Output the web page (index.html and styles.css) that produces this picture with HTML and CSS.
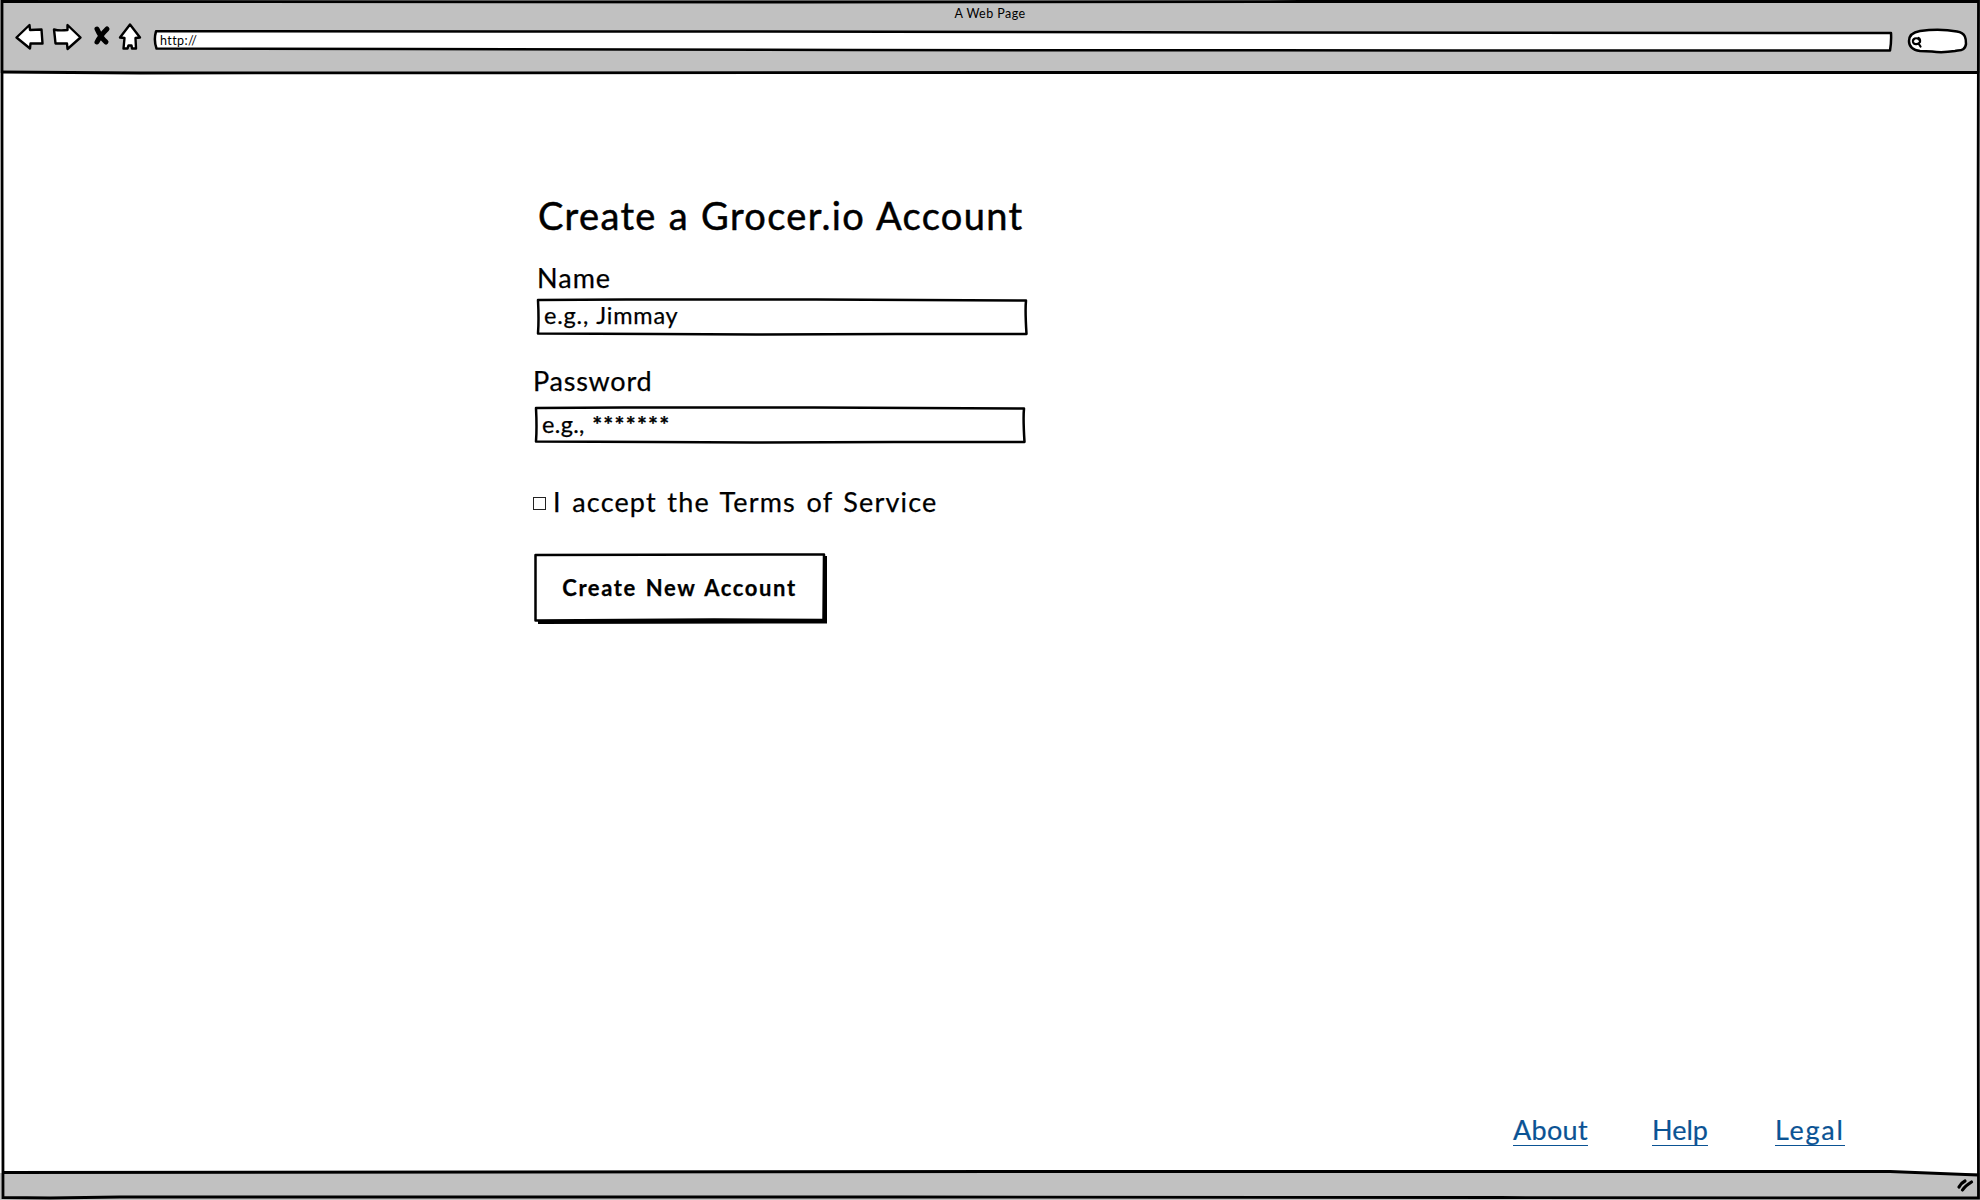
FILE: index.html
```html
<!DOCTYPE html>
<html lang="en">
<head>
<meta charset="utf-8">
<title>A Web Page</title>
<link rel="stylesheet" href="styles.css">
</head>
<body>
<div class="browser">
  <header class="chrome">
    <div class="window-title">A Web Page</div>
    <div class="toolbar">
      <svg class="nav-icons" width="130" height="32" viewBox="14 20 130 32">
        <g class="outline">
          <path d="M16.500 37.500 L29.500 25 L30 30 L41.500 29.500 L42.500 43.500 L30.500 43.500 L30 48.500 Z"/>
          <path d="M80.500 37.500 L67.500 25 L67.500 30 Q59 31 54 29.500 Q55 38 55.500 43.500 L67 43.500 L67.500 49 Z"/>
          <path d="M130 24.500 L120 37.500 L124.500 38 L123.500 48.500 L127.500 48.500 L128.500 45.500 L131.500 45.500 L132 48.500 L136 48.500 L135.500 38 L140 37.500 Z"/>
        </g>
        <path class="cross" d="M97 29 Q101 38 106 42 M107 29 Q100 36 97 42"/>
      </svg>
      <div class="address">
        <svg class="sketch" viewBox="0 0 1740 22" preserveAspectRatio="none"><path class="box" d="M3 1.300 L600 1.500 L1100 2.500 L1738 3 Q1738.500 12 1737 20.500 L1300 20.500 L700 20 L250 19 L3.500 18.500 Q.5 10 3 1.300 Z"/></svg>
        <span class="text">http://</span>
      </div>
      <svg class="search" width="62" height="28" viewBox="1907 27 62 28">
        <path class="box" d="M1909 41 C1909 34 1914 32 1920 31 Q1940 28.500 1957 31.500 C1966 33 1966 39 1966 44 C1965 51 1960 50 1955 51 Q1942 53 1932 51.500 L1920 51 C1913 50 1909 47 1909 41 Z"/>
        <path class="lens" d="M1919.500 40 C1916 36.500 1912.500 39 1913 42 C1914 45.500 1919 44 1920 42 Q1920.500 39 1918.500 38 M1918.500 43.500 L1920.500 46.500"/>
      </svg>
    </div>
  </header>
  <main class="page">
    <form class="account">
      <h1>Create a Grocer.io Account</h1>
      <label class="name-label">Name</label>
      <div class="field name-field">
        <svg class="sketch" viewBox="0 0 492 38"><path class="box" d="M2 2 L90 1.500 L280 1.500 L490 2.500 Q489 12 490.500 36 L360 36 L220 36.500 L120 36 L2 35.500 Q3 22 2 2 Z"/></svg>
        <span class="text">e.g., Jimmay</span>
      </div>
      <label class="password-label">Password</label>
      <div class="field password-field">
        <svg class="sketch" viewBox="0 0 492 38"><path class="box" d="M2 2 L90 1.500 L280 1.500 L490 2.500 Q489 12 490.500 36 L360 36 L220 36.500 L120 36 L2 35.500 Q3 22 2 2 Z"/></svg>
        <span class="text">e.g., <span class="stars">*******</span></span>
      </div>
      <label class="terms"><span class="check"></span><span class="terms-text">I accept the Terms of Service</span></label>
      <button type="button" class="create">
        <svg class="sketch" viewBox="0 0 294 72"><path d="M4 66 L289 66 L289 3 L293 3 L293 70.500 L4 71 Z"/><path class="box" d="M1.500 2 L290 1.500 L289.500 67 L180 66.500 L1.500 67.500 Z"/></svg>
        <span class="text">Create New Account</span>
      </button>
    </form>
    <nav class="links">
      <a class="about">About</a><a class="help">Help</a><a class="legal">Legal</a>
    </nav>
  </main>
  <footer class="status">
    <svg width="20" height="16" viewBox="0 0 20 16"><path d="M3 10 Q5 6 9 4 M6.500 13 Q9 9 15.500 5"/></svg>
  </footer>
  <svg class="frame" viewBox="0 0 1980 1200">
    <path d="M2 1.500 L800 2 L1300 1.500 L1978.500 1.500 L1977.500 500 L1978.500 1198 L1500 1197.500 L900 1197 L120 1197 L50 1198 L3 1197.500 L2.500 700 L2 130 Z"/>
    <path d="M2 72 L140 73 L1000 72.500 L1978 72.500"/>
    <path d="M3 1172.500 L1000 1171.500 L1890 1171.500 Q1920 1172.500 1978 1175"/>
  </svg>
</div>
</body>
</html>
```
FILE: styles.css
```css
* { box-sizing: border-box; }
html, body { height: 1200px; overflow: hidden; }
body { margin: 0; font-family: Lato, "Open Sans", sans-serif; color: #000; background: #fff; }
svg { display: block; overflow: visible; }
.browser { position: relative; width: 1980px; height: 1200px; display: flex; flex-direction: column; overflow: hidden; }
.frame { position: absolute; inset: 0; width: 1980px; height: 1200px; pointer-events: none; fill: none; stroke: #000; stroke-width: 2.8; }
.box { fill: #fff; stroke: #000; stroke-width: 2.5; stroke-linejoin: round; }
.sketch { position: absolute; left: 0; top: 0; width: 100%; height: 100%; }
.text { position: relative; white-space: pre; }

.chrome { height: 73px; background: #c1c1c1; }
.window-title { height: 20px; padding-top: 5px; line-height: 18px; font-size: 12.5px; letter-spacing: .45px; text-align: center; }
.toolbar { display: flex; height: 32px; padding-left: 14px; }
.outline { fill: #fff; stroke: #000; stroke-width: 2.4; stroke-linejoin: round; }
.cross { fill: none; stroke: #000; stroke-width: 5; stroke-linecap: round; }
.address { position: relative; width: 1740px; height: 22px; margin: 10px 0 0 9px; padding-left: 7px; line-height: 22px; font-size: 12.5px; letter-spacing: .4px; }
.search { margin: 7px 0 0 14px; }
.lens { fill: none; stroke: #000; stroke-width: 2.2; stroke-linecap: round; }

.page { flex: 1; display: flex; flex-direction: column; justify-content: space-between; }
.account { display: flex; flex-direction: column; align-items: flex-start; padding: 122px 0 0 533px; font-size: 27px; -webkit-text-stroke: .25px; }
h1 { margin: 0 0 0 5px; font-size: 38px; font-weight: 400; line-height: 40px; letter-spacing: 1.35px; word-spacing: 1px; -webkit-text-stroke: .5px; }
.name-label { margin: 27px 0 0 4px; line-height: 32px; letter-spacing: 1px; }
.field { position: relative; width: 492px; height: 38px; line-height: 35px; padding-left: 8px; font-size: 23.5px; letter-spacing: .8px; word-spacing: 1px; }
.name-field { margin: 4px 0 0 3px; }
.password-label { margin: 29px 0 0 0; line-height: 32px; letter-spacing: .75px; }
.password-field { margin: 9px 0 0 1px; line-height: 37px; letter-spacing: .35px; word-spacing: 1px; }
.stars { font-weight: 700; letter-spacing: 1.2px; }
.terms { display: flex; align-items: center; gap: 7px; height: 32px; margin-top: 43px; letter-spacing: 1.15px; word-spacing: 2.5px; }
.terms-text { padding-bottom: 3px; }
.check { width: 13px; height: 13px; border: 1px solid #222; }
.create { position: relative; width: 294px; height: 72px; margin: 34px 0 0 1px; padding: 0 3px 3px 0; border: 0; background: none; font: 700 22px Lato, sans-serif; letter-spacing: 1.6px; word-spacing: 2px; color: #000; }

.links { display: flex; height: 60px; padding-left: 1513px; font-size: 27px; line-height: 34px; color: #0b5394; -webkit-text-stroke: .2px; }
.links a { height: 33px; border-bottom: 1px solid #0b5394; }
.about { width: 75px; margin-right: 64px; letter-spacing: .3px; }
.help { width: 56px; margin-right: 67px; }
.legal { width: 70px; letter-spacing: 1.7px; }
.status { height: 27px; background: #c1c1c1; display: flex; justify-content: flex-end; padding: 4px 4px 0 0; fill: none; stroke: #000; stroke-width: 3.2; stroke-linecap: round; }
```
